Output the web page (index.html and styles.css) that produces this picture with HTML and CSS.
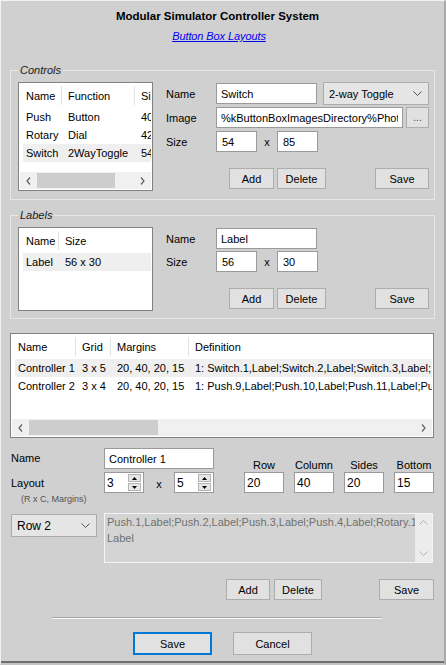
FILE: index.html
```html
<!DOCTYPE html>
<html>
<head>
<meta charset="utf-8">
<link rel="stylesheet" href="styles.css">
</head>
<body>
<div class="window">
  <div class="title">Modular Simulator Controller System</div>
  <div class="subtitle"><a class="link" href="#">Button Box Layouts</a></div>

  <fieldset class="group group-controls">
    <legend>Controls</legend>
    <div class="group-body">
      <div class="list list-controls">
        <div class="lv-head">
          <span class="c cc1">Name</span><span class="c cc2">Function</span><span class="c cc3">Size</span>
        </div>
        <div class="lv-body">
          <div class="lv-row"><span class="c cc1">Push</span><span class="c cc2">Button</span><span class="c cc3">40 x 40</span></div>
          <div class="lv-row"><span class="c cc1">Rotary</span><span class="c cc2">Dial</span><span class="c cc3">42 x 42</span></div>
          <div class="lv-row sel"><span class="c cc1">Switch</span><span class="c cc2">2WayToggle</span><span class="c cc3">54 x 85</span></div>
        </div>
        <div class="hscroll">
          <span class="sb-arrow"><svg width="5" height="8" viewBox="0 0 5 8"><polyline points="4,0.5 1,4 4,7.5" fill="none" stroke="#606060" stroke-width="1.2"/></svg></span>
          <span class="sb-thumb thumb-controls"></span>
          <span class="sb-fill"></span>
          <span class="sb-arrow"><svg width="5" height="8" viewBox="0 0 5 8"><polyline points="1,0.5 4,4 1,7.5" fill="none" stroke="#606060" stroke-width="1.2"/></svg></span>
        </div>
      </div>

      <div class="form">
        <div class="frow r-first">
          <span class="lbl">Name</span>
          <span class="input w-name">Switch</span>
          <span class="select w-func">2-way Toggle<svg class="chev" width="9" height="5" viewBox="0 0 9 5"><polyline points="0.5,0.5 4.5,4.5 8.5,0.5" fill="none" stroke="#555" stroke-width="1"/></svg></span>
        </div>
        <div class="frow r-second">
          <span class="lbl">Image</span>
          <span class="input w-image"><span class="clip">%kButtonBoxImagesDirectory%Photo</span></span>
          <span class="btn btn-dots">...</span>
        </div>
        <div class="frow r-third">
          <span class="lbl">Size</span>
          <span class="input w-size">54</span>
          <span class="times">x</span>
          <span class="input w-size">85</span>
        </div>
        <div class="frow r-buttons">
          <span class="btn b-add">Add</span>
          <span class="btn b-del">Delete</span>
          <span class="btn b-save">Save</span>
        </div>
      </div>
    </div>
  </fieldset>

  <fieldset class="group group-labels">
    <legend>Labels</legend>
    <div class="group-body">
      <div class="list list-labels">
        <div class="lv-head">
          <span class="c lc1">Name</span><span class="c lc2">Size</span>
        </div>
        <div class="lv-body">
          <div class="lv-row sel"><span class="c lc1">Label</span><span class="c lc2">56 x 30</span></div>
        </div>
      </div>

      <div class="form">
        <div class="frow r-first">
          <span class="lbl">Name</span>
          <span class="input w-name">Label</span>
        </div>
        <div class="frow r-third-l">
          <span class="lbl">Size</span>
          <span class="input w-size">56</span>
          <span class="times">x</span>
          <span class="input w-size">30</span>
        </div>
        <div class="frow r-buttons">
          <span class="btn b-add">Add</span>
          <span class="btn b-del">Delete</span>
          <span class="btn b-save">Save</span>
        </div>
      </div>
    </div>
  </fieldset>

  <div class="list list-ctrl">
    <div class="lv-head">
      <span class="c kc1">Name</span><span class="c kc2">Grid</span><span class="c kc3">Margins</span><span class="c kc4">Definition</span>
    </div>
    <div class="lv-body">
      <div class="lv-row sel"><span class="c kc1">Controller 1</span><span class="c kc2">3 x 5</span><span class="c kc3">20, 40, 20, 15</span><span class="c kc4">1: Switch.1,Label;Switch.2,Label;Switch.3,Label;</span></div>
      <div class="lv-row"><span class="c kc1">Controller 2</span><span class="c kc2">3 x 4</span><span class="c kc3">20, 40, 20, 15</span><span class="c kc4">1: Push.9,Label;Push.10,Label;Push.11,Label;Pus</span></div>
    </div>
    <div class="hscroll">
      <span class="sb-arrow"><svg width="5" height="8" viewBox="0 0 5 8"><polyline points="4,0.5 1,4 4,7.5" fill="none" stroke="#606060" stroke-width="1.2"/></svg></span>
      <span class="sb-thumb thumb-ctrl"></span>
      <span class="sb-fill"></span>
      <span class="sb-arrow"><svg width="5" height="8" viewBox="0 0 5 8"><polyline points="1,0.5 4,4 1,7.5" fill="none" stroke="#606060" stroke-width="1.2"/></svg></span>
    </div>
  </div>

  <div class="editor">
    <div class="ed-labels">
      <div class="ed-name">Name</div>
      <div class="ed-layout">Layout</div>
      <div class="ed-hint">(R x C, Margins)</div>
    </div>
    <div class="ed-mid">
      <span class="input w-ctrlname">Controller 1</span>
      <div class="spins">
        <div class="spin">
          <span class="spin-val">3</span>
          <span class="spin-btns">
            <span class="spin-btn"><svg width="5" height="3" viewBox="0 0 5 3"><polygon points="0,3 2.5,0 5,3" fill="#000"/></svg></span>
            <span class="spin-btn"><svg width="5" height="3" viewBox="0 0 5 3"><polygon points="0,0 2.5,3 5,0" fill="#000"/></svg></span>
          </span>
        </div>
        <span class="spin-x">x</span>
        <div class="spin">
          <span class="spin-val">5</span>
          <span class="spin-btns">
            <span class="spin-btn"><svg width="5" height="3" viewBox="0 0 5 3"><polygon points="0,3 2.5,0 5,3" fill="#000"/></svg></span>
            <span class="spin-btn"><svg width="5" height="3" viewBox="0 0 5 3"><polygon points="0,0 2.5,3 5,0" fill="#000"/></svg></span>
          </span>
        </div>
      </div>
    </div>
    <div class="ed-margins">
      <div class="m-col"><span class="m-lbl">Row</span><span class="input m-in">20</span></div>
      <div class="m-col"><span class="m-lbl">Column</span><span class="input m-in">40</span></div>
      <div class="m-col"><span class="m-lbl">Sides</span><span class="input m-in">20</span></div>
      <div class="m-col"><span class="m-lbl">Bottom</span><span class="input m-in">15</span></div>
    </div>
  </div>

  <div class="rowdef">
    <span class="select w-row">Row 2<svg class="chev" width="9" height="5" viewBox="0 0 9 5"><polyline points="0.5,0.5 4.5,4.5 8.5,0.5" fill="none" stroke="#555" stroke-width="1"/></svg></span>
    <div class="ta">
      <div class="ta-text">Push.1,Label;Push.2,Label;Push.3,Label;Push.4,Label;Rotary.1,<br>Label</div>
      <div class="vscroll">
        <svg width="9" height="5" viewBox="0 0 9 5"><polyline points="0.5,4.5 4.5,0.5 8.5,4.5" fill="none" stroke="#b0b0b0" stroke-width="1"/></svg>
        <svg width="9" height="5" viewBox="0 0 9 5"><polyline points="0.5,0.5 4.5,4.5 8.5,0.5" fill="none" stroke="#b0b0b0" stroke-width="1"/></svg>
      </div>
    </div>
  </div>

  <div class="btnrow3">
    <span class="btn b3-add">Add</span>
    <span class="btn b3-del">Delete</span>
    <span class="btn b3-save">Save</span>
  </div>

  <div class="sep"></div>

  <div class="final">
    <span class="btn f-save">Save</span>
    <span class="btn f-cancel">Cancel</span>
  </div>
</div>
</body>
</html>
```

FILE: styles.css
```css
html, body {
  margin: 0;
  padding: 0;
  background: #d0d0d0;
}
body {
  font-family: "Liberation Sans", Arial, sans-serif;
  font-size: 11px;
  color: #000;
}
.window {
  width: 446px;
  height: 665px;
  box-sizing: border-box;
  background: #d0d0d0;
  border-left: 1px solid #f2f2f2;
  border-top: 1px solid #f2f2f2;
  border-right: 2px solid #a8a8a8;
  border-bottom: 2px solid #c4c4c4;
  box-shadow: inset 0 -2px 0 #707070;
  padding-left: 9px;
  overflow: hidden;
}
.title {
  padding-top: 7px;
  margin-right: 19px;
  line-height: 16px;
  text-align: center;
  font-weight: bold;
  font-size: 11.5px;
}
.subtitle {
  margin-top: 4px;
  margin-right: 16px;
  line-height: 16px;
  text-align: center;
}
.link {
  color: #0000ee;
  font-style: italic;
  text-decoration: underline;
  letter-spacing: -0.1px;
}

/* group boxes */
.group {
  margin: 0;
  width: 425px;
  box-sizing: border-box;
  border: 1px solid #e6e6e6;
  padding: 5px 7px 8px 7px;
  min-width: 0;
}
.group legend {
  padding: 0 2px;
  line-height: 14px;
  font-style: italic;
  color: #1a1a1a;
}
.group-controls { margin-top: 19px; }
.group-labels { margin-top: 8px; padding-bottom: 7px; }
.group-body {
  display: flex;
  align-items: flex-start;
}

/* list views */
.list {
  flex: none;
  box-sizing: border-box;
  border: 1px solid #828282;
  background: #fff;
  padding: 1px;
  display: flex;
  flex-direction: column;
  overflow: hidden;
  white-space: nowrap;
}
.list-controls { width: 135px; height: 109px; }
.list-labels { width: 135px; height: 84px; }
.list-ctrl { width: 424px; height: 105px; margin-top: 14px; }
.lv-head {
  height: 24px;
  flex: none;
  display: flex;
  align-items: center;
  padding-left: 3px;
  overflow: hidden;
}
.lv-body {
  padding-left: 3px;
  overflow: hidden;
}
.lv-row {
  height: 18px;
  display: flex;
  align-items: center;
}
.lv-row.sel { background: #efefef; }
.c {
  flex: none;
  box-sizing: border-box;
  padding-left: 3px;
  overflow: hidden;
}
.lv-head .c {
  position: relative;
  height: 24px;
  line-height: 24px;
}
.lv-head .c::after {
  content: "";
  position: absolute;
  right: 3px;
  top: 2px;
  height: 19px;
  border-right: 1px solid #e3e3e3;
}
.cc1 { width: 42px; }
.cc2 { width: 73px; }
.cc3 { width: 60px; }
.lc1 { width: 39px; }
.lc2 { width: 200px; }
.kc1 { width: 64px; }
.kc2 { width: 35px; }
.kc3 { width: 78px; }
.kc4 { width: 360px; }

.hscroll {
  margin-top: auto;
  flex: none;
  height: 17px;
  background: #f0f0f0;
  display: flex;
  align-items: center;
}
.sb-arrow {
  flex: none;
  width: 17px;
  height: 17px;
  display: flex;
  align-items: center;
  justify-content: center;
}
.sb-thumb {
  flex: none;
  height: 15px;
  background: #cdcdcd;
}
.sb-fill { flex: 1; }
.thumb-controls { width: 78px; }
.thumb-ctrl { width: 129px; }

/* forms */
.form {
  margin-left: 13px;
  width: 263px;
  flex: none;
  display: flex;
  flex-direction: column;
}
.frow {
  display: flex;
  align-items: center;
}
.lbl { width: 50px; flex: none; }
.r-first { height: 23px; }
.r-second { height: 21px; margin-top: 2px; }
.r-third { height: 21px; margin-top: 3px; }
.r-third-l { height: 21px; margin-top: 1px; }
.r-buttons { height: 21px; margin-top: 16px; }

.input {
  flex: none;
  box-sizing: border-box;
  height: 21px;
  border: 1px solid #9a9a9a;
  background: #fff;
  padding: 0 4px;
  display: flex;
  align-items: center;
  white-space: nowrap;
  overflow: hidden;
}
.clip {
  display: block;
  overflow: hidden;
  width: 100%;
}
.w-name { width: 101px; }
.w-image { width: 187px; }
.w-size { width: 41px; padding-left: 5px; }
.times {
  width: 20px;
  text-align: center;
  flex: none;
}
.select {
  flex: none;
  box-sizing: border-box;
  height: 23px;
  border: 1px solid #acacac;
  background: #e5e5e5;
  padding: 0 6px 0 5px;
  display: flex;
  align-items: center;
  justify-content: space-between;
  white-space: nowrap;
}
.w-func { width: 106px; margin-left: 6px; }
.chev { flex: none; }

.btn {
  flex: none;
  box-sizing: border-box;
  height: 21px;
  border: 1px solid #adadad;
  background: #e1e1e1;
  display: flex;
  align-items: center;
  justify-content: center;
  white-space: nowrap;
}
.btn-dots { width: 23px; margin-left: 3px; color: #444; font-size: 10px; }
.b-add { width: 45px; margin-left: 63px; }
.b-del { width: 49px; margin-left: 3px; }
.b-save { width: 54px; margin-left: auto; }

/* editor */
.editor {
  display: flex;
  align-items: flex-start;
  margin-top: 10px;
  margin-left: 1px;
}
.ed-labels { width: 93px; flex: none; }
.ed-name { line-height: 21px; }
.ed-layout { line-height: 14px; margin-top: 7px; }
.ed-hint {
  line-height: 12px;
  margin-top: 3px;
  margin-left: 10px;
  font-size: 9px;
  color: #555;
}
.ed-mid { width: 110px; flex: none; }
.w-ctrlname { width: 110px; }
.spins {
  display: flex;
  align-items: center;
  margin-top: 3px;
}
.spin {
  flex: none;
  box-sizing: border-box;
  width: 40px;
  height: 21px;
  border: 1px solid #9a9a9a;
  background: #fff;
  display: flex;
}
.spin-val {
  flex: 1;
  padding-left: 2px;
  display: flex;
  align-items: center;
  font-size: 12px;
}
.spin-btns {
  flex: none;
  width: 13px;
  padding: 1px 2px 1px 0;
  display: flex;
  flex-direction: column;
  gap: 1px;
}
.spin-btn {
  flex: 1;
  border: 1px solid #b4b4b4;
  background: #e6e6e6;
  display: flex;
  align-items: center;
  justify-content: center;
}
.spin-x {
  width: 30px;
  flex: none;
  text-align: center;
  padding-top: 2px;
}
.ed-margins {
  display: flex;
  gap: 10px;
  margin-left: 30px;
  margin-top: 10px;
}
.m-col {
  width: 40px;
  display: flex;
  flex-direction: column;
  align-items: center;
}
.m-lbl { line-height: 14px; }
.m-in {
  width: 40px;
  padding-left: 2px;
  font-size: 12px;
  padding-top: 1px;
}

.rowdef {
  display: flex;
  align-items: flex-start;
  margin-top: 8px;
  margin-left: 1px;
}
.w-row { width: 86px; margin-top: 1px; font-size: 12px; }
.ta {
  margin-left: 7px;
  width: 329px;
  height: 50px;
  box-sizing: border-box;
  border: 1px solid #f4f4f4;
  background: #d4d4d4;
  display: flex;
}
.ta-text {
  flex: 1;
  padding: 0 3px 0 2px;
  line-height: 16px;
  color: #707070;
  white-space: nowrap;
  overflow: hidden;
}
.vscroll {
  width: 17px;
  flex: none;
  background: #ececec;
  display: flex;
  flex-direction: column;
  align-items: center;
  justify-content: space-between;
  padding: 6px 0 6px;
  box-sizing: border-box;
}

.btnrow3 {
  display: flex;
  width: 424px;
  margin-top: 16px;
}
.b3-add { width: 44px; margin-left: 216px; }
.b3-del { width: 48px; margin-left: 4px; }
.b3-save { width: 55px; margin-left: auto; }

.sep {
  margin-top: 17px;
  margin-left: 42px;
  width: 330px;
  border-top: 1px solid #a8a8a8;
  border-bottom: 1px solid #fafafa;
}
.final {
  display: flex;
  margin-top: 13px;
}
.f-save {
  width: 79px;
  height: 23px;
  margin-left: 123px;
  border: 1px solid #0078d7;
  box-shadow: inset 0 0 0 1px #0078d7;
}
.f-cancel {
  width: 79px;
  height: 23px;
  margin-left: 21px;
}
```
